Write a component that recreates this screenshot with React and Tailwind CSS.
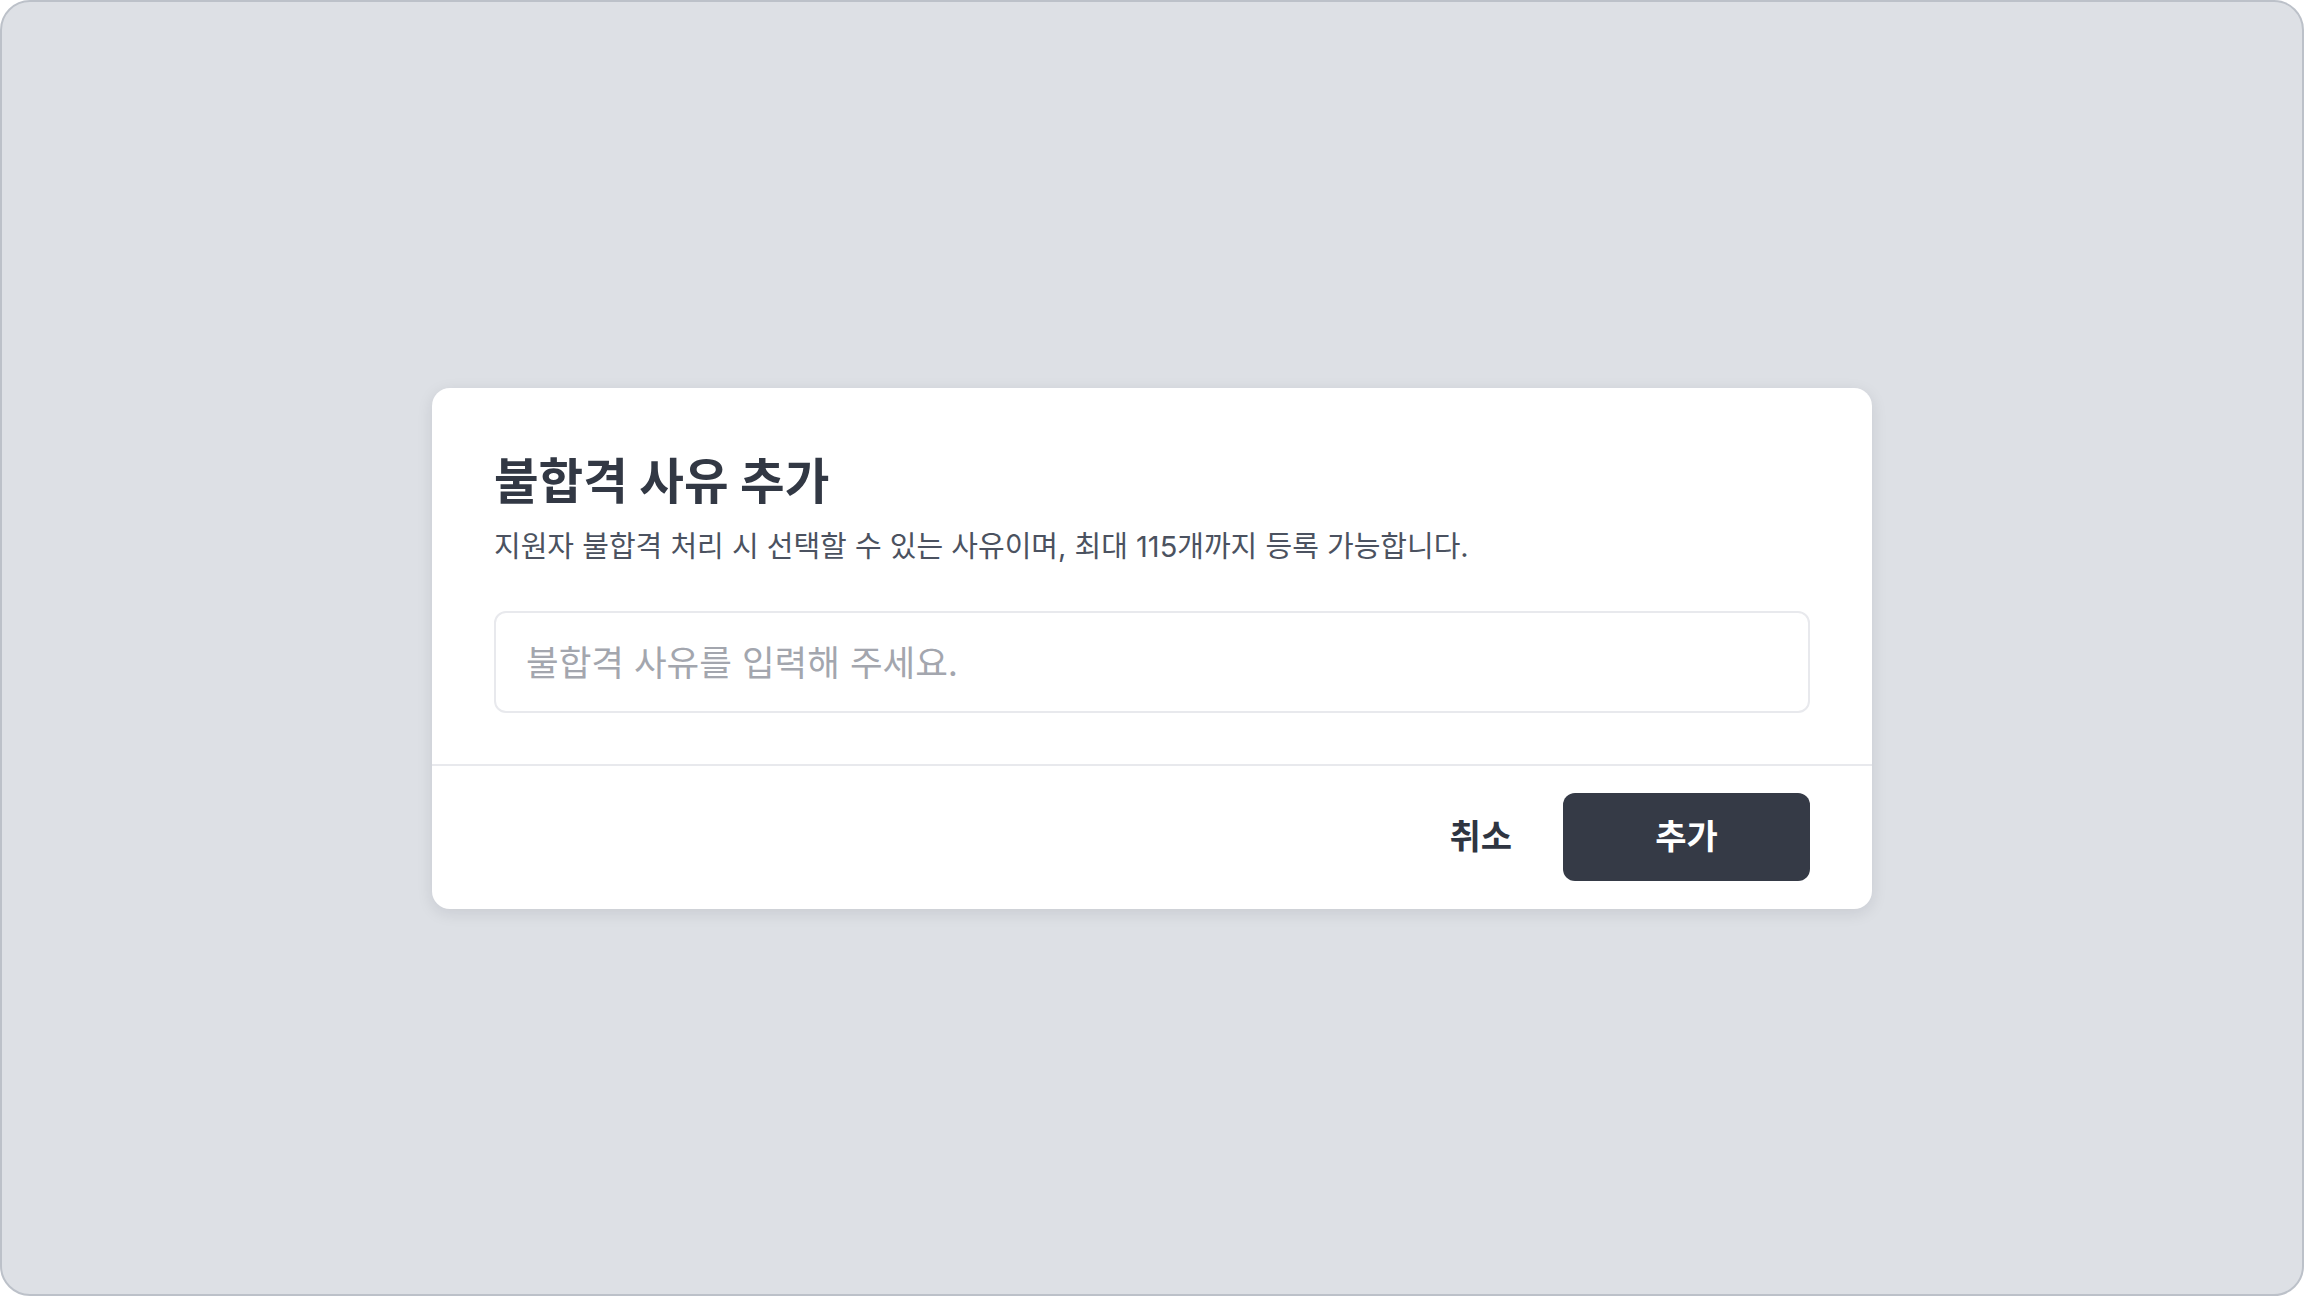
export default function App() {
  return (
    <div className="h-screen w-full bg-white font-['Inter','Noto_Sans_CJK_KR',sans-serif]">
      <div className="flex h-full w-full items-center justify-center rounded-[30px] border-2 border-[#bcc1c9] bg-[#dde0e5]">
        <div className="w-[1440px] rounded-[18px] bg-white shadow-[0_4px_16px_rgba(15,23,42,0.10)]">
          <div className="px-[62px] pt-[65px] pb-[51px]">
            <h2 className="text-[48.5px] font-bold leading-[58px] text-[#323844]">
              불합격 사유 추가
            </h2>
            <p className="mt-[16px] text-[29px] leading-[40px] text-[#4b5260]">
              지원자 불합격 처리 시 선택할 수 있는 사유이며, 최대 115개까지 등록 가능합니다.
            </p>
            <input
              type="text"
              placeholder="불합격 사유를 입력해 주세요."
              className="mt-[44px] block h-[102px] w-full rounded-[12px] border-2 border-[#e8e9ed] bg-white px-[30px] pt-[4px] text-[35.5px] text-[#323844] outline-none placeholder:text-[#a3a6ae]"
            />
          </div>
          <div className="h-[2px] w-full bg-[#e8e9ed]" />
          <div className="flex items-center justify-end gap-[29px] px-[62px] pt-[27px] pb-[28px]">
            <button className="h-[88px] px-[22px] text-[34px] font-bold text-[#2f3541]">
              취소
            </button>
            <button className="h-[88px] w-[247px] rounded-[12px] bg-[#353a46] text-[34px] font-bold text-white">
              추가
            </button>
          </div>
        </div>
      </div>
    </div>
  );
}
